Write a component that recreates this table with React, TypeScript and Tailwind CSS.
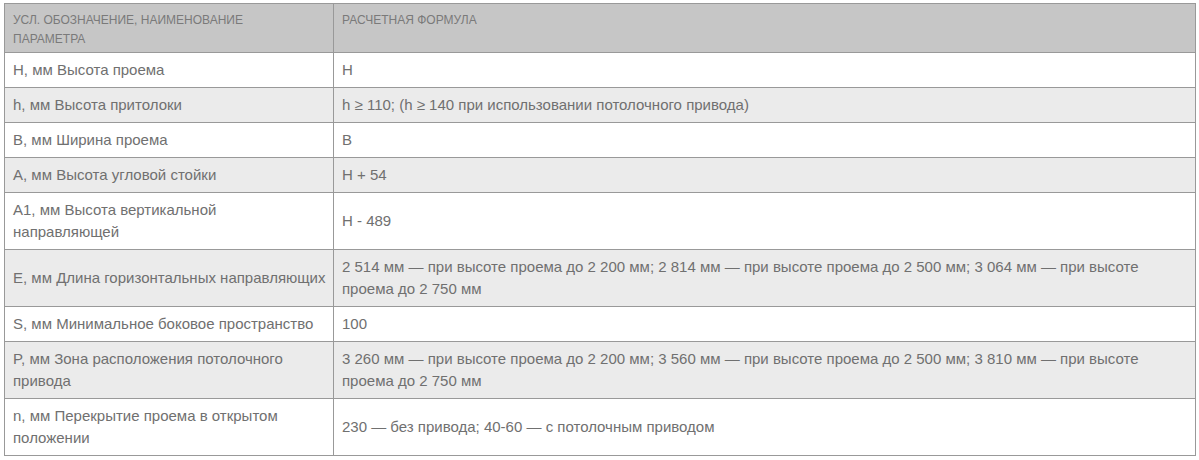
import React from 'react';

const rows: { name: string[]; formula: string }[] = [
  { name: ['H, мм Высота проема'], formula: 'H' },
  { name: ['h, мм Высота притолоки'], formula: 'h ≥ 110; (h ≥ 140 при использовании потолочного привода)' },
  { name: ['B, мм Ширина проема'], formula: 'B' },
  { name: ['A, мм Высота угловой стойки'], formula: 'H + 54' },
  { name: ['A1, мм Высота вертикальной', 'направляющей'], formula: 'H - 489' },
  {
    name: ['E, мм Длина горизонтальных направляющих'],
    formula:
      '2 514 мм — при высоте проема до 2 200 мм; 2 814 мм — при высоте проема до 2 500 мм; 3 064 мм — при высоте проема до 2 750 мм',
  },
  { name: ['S, мм Минимальное боковое пространство'], formula: '100' },
  {
    name: ['P, мм Зона расположения потолочного', 'привода'],
    formula:
      '3 260 мм — при высоте проема до 2 200 мм; 3 560 мм — при высоте проема до 2 500 мм; 3 810 мм — при высоте проема до 2 750 мм',
  },
  { name: ['n, мм Перекрытие проема в открытом', 'положении'], formula: '230 — без привода; 40-60 — с потолочным приводом' },
];

const App: React.FC = () => {
  return (
    <div className="bg-white w-[1199px] h-[460px] pt-[3px] pl-[4px] font-['Liberation_Sans',Arial,sans-serif]">
      <table className="w-[1192px] border-collapse table-fixed text-[#707070]">
        <colgroup>
          <col className="w-[329px]" />
          <col />
        </colgroup>
        <thead>
          {/* шапка */}
          <tr className="bg-[#c6c6c6]">
            <th className="border border-[#999] align-top text-left font-normal uppercase text-[12px] leading-[19px] pl-[8px] pr-[60px] pt-[7px] pb-[3px] h-[49px] text-[#7a7a7a]">
              Усл. обозначение, наименование параметра
            </th>
            <th className="border border-[#999] align-top text-left font-normal uppercase text-[12px] leading-[19px] px-[8px] pt-[7px] pb-[3px] text-[#7a7a7a]">
              Расчетная формула
            </th>
          </tr>
        </thead>
        <tbody>
          {rows.map((r, i) => (
            <tr key={i} className={i % 2 === 0 ? 'bg-white' : 'bg-[#ebebeb]'}>
              <td className="border border-[#999] align-middle text-[15px] leading-[22px] pl-[8px] pr-[4px] py-[6px] whitespace-nowrap">
                {r.name.map((line, j) => (
                  <div key={j}>{line}</div>
                ))}
              </td>
              <td className="border border-[#999] align-middle text-[15px] leading-[22px] px-[8px] py-[6px]">{r.formula}</td>
            </tr>
          ))}
        </tbody>
      </table>
    </div>
  );
};

export default App;
